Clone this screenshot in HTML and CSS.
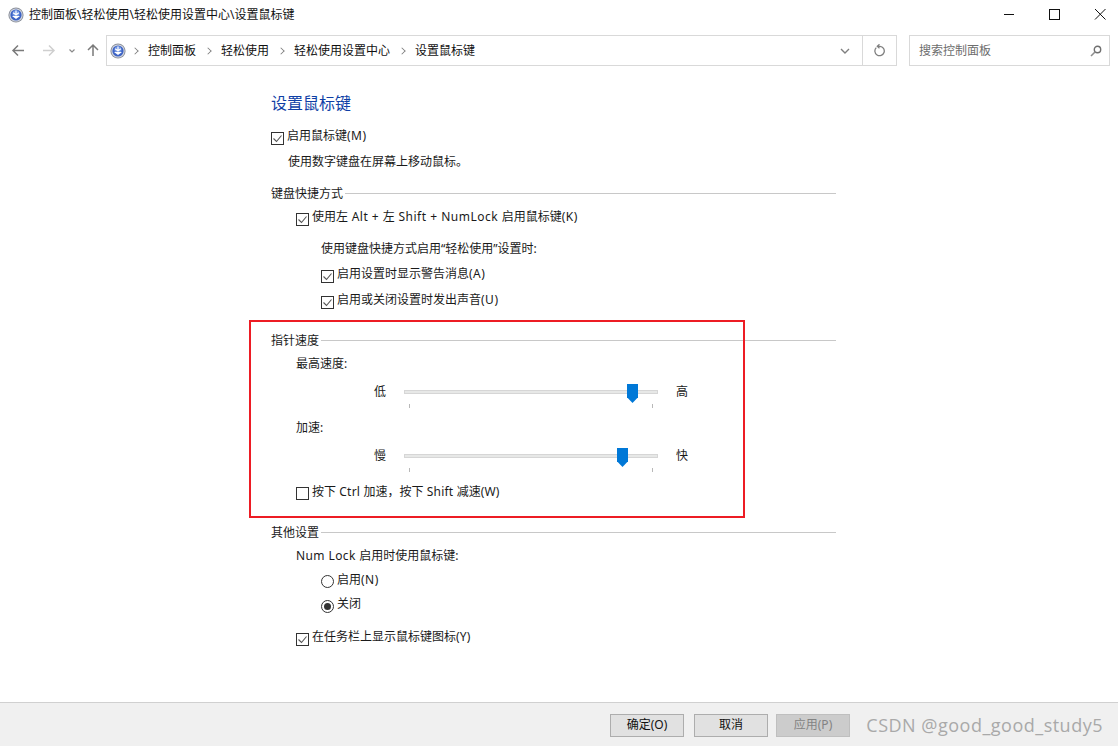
FILE: index.html
```html
<!DOCTYPE html>
<html lang="zh-CN">
<head>
<meta charset="utf-8">
<title>设置鼠标键</title>
<link rel="stylesheet" href="styles.css">
</head>
<body>
<svg class="defs" width="0" height="0">
  <defs>
    <symbol id="cp" viewBox="0 0 16 16">
      <circle cx="8" cy="8" r="7.6" fill="#8c919c"/>
      <circle cx="8" cy="8" r="6.6" fill="#d4d8e0"/>
      <circle cx="8" cy="8" r="5.6" fill="#3d63c4"/>
      <circle cx="8" cy="6.800" r="3.600" fill="#6f94e2"/>
      <path d="M8 3.600v3.400M5.200 5.800L8 8l2.800-2.200" stroke="#fff" stroke-width="1.200" fill="none"/>
      <path d="M4 9h8l-4 3z" fill="#fff"/>
    </symbol>
    <symbol id="check" viewBox="0 0 13 13">
      <rect x=".5" y=".5" width="12" height="12" fill="#fff" stroke="#333"/>
      <path d="M2.500 6.500l3 3 5-6" fill="none" stroke="#555" stroke-width="1.100"/>
    </symbol>
  </defs>
</svg>
<div class="window">
  <header class="titlebar">
    <svg class="cp-icon"><use href="#cp"/></svg>
    <span class="title-text">控制面板\轻松使用\轻松使用设置中心\设置鼠标键</span>
    <div class="controls">
      <svg class="ctl" viewBox="0 0 46 30"><path d="M24 14.500h10" stroke="#111" fill="none"/></svg>
      <svg class="ctl" viewBox="0 0 46 30"><rect x="23.500" y="9.500" width="10" height="10" stroke="#111" fill="none"/></svg>
      <svg class="ctl" viewBox="0 0 46 30"><path d="M23 9l10.500 10.500M33.500 9L23 19.500" stroke="#111" fill="none"/></svg>
    </div>
  </header>
  <nav class="navbar">
    <div class="nav-btns">
      <svg class="nav-svg" viewBox="0 0 106 30"><g fill="none"><path d="M13 15.500h11M18 10.500l-5 5 5 5" stroke="#7a7a7a" stroke-width="1.500"/><path d="M43 15.500h11M49 10.500l5 5-5 5" stroke="#cfcfcf" stroke-width="1.500"/><path d="M69.500 14.500l2.500 2.500 2.500-2.500" stroke="#8a8a8a" stroke-width="1.200"/><path d="M93 21V10M88 15l5-5 5 5" stroke="#7a7a7a" stroke-width="1.500"/></g></svg>
    </div>
    <div class="address">
      <svg class="cp-icon"><use href="#cp"/></svg>
      <span class="crumb-sep first"></span><span class="crumb">控制面板</span>
      <span class="crumb-sep"></span><span class="crumb">轻松使用</span>
      <span class="crumb-sep"></span><span class="crumb">轻松使用设置中心</span>
      <span class="crumb-sep"></span><span class="crumb">设置鼠标键</span>
      <span class="addr-spacer"></span>
      <span class="drop"><svg width="10" height="6" viewBox="0 0 10 6"><path d="M1 1l4 4 4-4" fill="none" stroke="#7f7f7f" stroke-width="1.400"/></svg></span>
      <span class="refresh"><svg width="14" height="14" viewBox="0 0 14 14"><path d="M3.300 3.600A4.700 4.700 0 1 0 7 2.300H4.500M6.500 .3L4.300 2.300l2.200 2" fill="none" stroke="#7f7f7f" stroke-width="1.300"/></svg></span>
    </div>
    <div class="search">
      <span class="search-text">搜索控制面板</span>
      <svg width="12" height="12" viewBox="0 0 12 12"><circle cx="7.500" cy="4.500" r="3.200" fill="none" stroke="#6f6f6f" stroke-width="1.400"/><path d="M5 7l-4 4" stroke="#8f8f8f" stroke-width="1.600"/></svg>
    </div>
  </nav>
  <main class="content">
    <h1 class="heading">设置鼠标键</h1>
    <div class="row m12"><svg class="box"><use href="#check"/></svg><span>启用鼠标键<b class="lat">(M)</b></span></div>
    <div class="row m10 desc">使用数字键盘在屏幕上移动鼠标。</div>

    <div class="section m15"><span class="sec-label">键盘快捷方式</span><i class="rule"></i></div>
    <div class="row m8 in1"><svg class="box"><use href="#check"/></svg><span>使用左<b class="lat"> Alt + </b>左<b class="lat"> Shift + NumLock </b>启用鼠标键<b class="lat">(K)</b></span></div>
    <div class="row m16 in2">使用键盘快捷方式启用“轻松使用”设置时:</div>
    <div class="row m9 in2"><svg class="box"><use href="#check"/></svg><span>启用设置时显示警告消息<b class="lat">(A)</b></span></div>
    <div class="row m10 in2"><svg class="box"><use href="#check"/></svg><span>启用或关闭设置时发出声音<b class="lat">(U)</b></span></div>

    <div class="section m24"><span class="sec-label">指针速度</span><i class="rule"></i></div>
    <div class="row m8 in1">最高速度:</div>
    <div class="slider m12">
      <span class="end">低</span>
      <div class="track"><i class="thumb" style="left:222px"></i><i class="tick tick-a"></i><i class="tick tick-b"></i></div>
      <span class="end">高</span>
    </div>
    <div class="row m12 in1">加速:</div>
    <div class="slider m12">
      <span class="end">慢</span>
      <div class="track"><i class="thumb" style="left:212px"></i><i class="tick tick-a"></i><i class="tick tick-b"></i></div>
      <span class="end">快</span>
    </div>
    <div class="row m12 in1"><span class="box empty"></span><span>按下<b class="lat-s"> Ctrl </b>加速，按下<b class="lat-s"> Shift </b>减速<b class="lat-s">(W)</b></span></div>

    <div class="section m24"><span class="sec-label">其他设置</span><i class="rule"></i></div>
    <div class="row m8 in1"><span><b class="lat-m">Num Lock </b>启用时使用鼠标键:</span></div>
    <div class="row m8 in2"><span class="radio up"></span><span>启用<b class="lat">(N)</b></span></div>
    <div class="row m8 in2"><span class="radio on"></span><span>关闭</span></div>
    <div class="row m17 in1"><svg class="box"><use href="#check"/></svg><span>在任务栏上显示鼠标键图标<b class="lat-s">(Y)</b></span></div>
  </main>
  <footer class="footer">
    <button class="btn">确定(O)</button>
    <button class="btn cancel">取消</button>
    <button class="btn disabled">应用(P)</button>
  </footer>
  <div class="redbox"></div>
  <div class="watermark">CSDN @good_good_study5</div>
</div>
</body>
</html>
```
FILE: styles.css
```css
* { box-sizing: border-box; }
html, body { margin: 0; padding: 0; background: #fff; }
body {
  font-family: "Noto Sans", "Noto Sans CJK SC", sans-serif;
  font-size: 12px;
  color: #1a1a1a;
}
.defs { position: absolute; }
.window {
  position: relative;
  width: 1118px;
  height: 746px;
  display: flex;
  flex-direction: column;
  overflow: hidden;
}
.titlebar {
  height: 30px;
  display: flex;
  align-items: center;
  padding-left: 8px;
  flex: none;
}
.cp-icon { width: 16px; height: 16px; flex: none; }
.title-text { margin-left: 5px; line-height: 16px; color: #111; }
.controls { margin-left: auto; display: flex; }
.ctl { width: 46px; height: 30px; display: block; }
.navbar {
  height: 40px;
  flex: none;
  display: flex;
  align-items: flex-start;
  padding: 5px 8px 0 0;
}
.nav-btns { width: 106px; height: 30px; flex: none; }
.nav-svg { display: block; width: 106px; height: 30px; }
.address {
  width: 791px;
  height: 31px;
  border: 1px solid #d9d9d9;
  display: flex;
  align-items: center;
  padding-left: 3px;
  flex: none;
}
.crumb { line-height: 16px; color: #111; margin-right: 7px; }
.crumb-sep {
  width: 6px;
  height: 6px;
  margin: 0 10px 0 2px;
  border-top: 1.3px solid #777;
  border-right: 1.3px solid #777;
  transform: rotate(45deg) scale(.85);
  flex: none;
}
.crumb-sep.first { margin-left: 6px; }
.addr-spacer { flex: 1; }
.drop {
  width: 34px;
  height: 100%;
  display: flex;
  align-items: center;
  justify-content: center;
}
.refresh {
  width: 34px;
  height: 100%;
  border-left: 1px solid #d9d9d9;
  display: flex;
  align-items: center;
  justify-content: center;
}
.search {
  width: 201px;
  height: 31px;
  margin-left: 12px;
  border: 1px solid #d9d9d9;
  display: flex;
  align-items: center;
  justify-content: space-between;
  padding: 0 7px 0 9px;
  flex: none;
}
.search-text { color: #6d6d6d; line-height: 16px; }
.content {
  flex: 1;
  padding: 21px 282px 0 271px;
}
.heading {
  margin: 0;
  height: 24px;
  line-height: 24px;
  font-size: 16px;
  font-weight: 400;
  color: #0f3fa6;
}
.heading + .row { margin-top: 13px; }
.lat { font-weight: 400; letter-spacing: .5px; }
.lat-m { font-weight: 400; letter-spacing: .4px; }
.lat-s { font-weight: 400; letter-spacing: .2px; }
.row { height: 16px; line-height: 16px; display: flex; align-items: flex-start; white-space: pre; }
.box { width: 13px; height: 13px; margin: 4px 3px 0 0; flex: none; display: block; }
.box.empty { background: #fff; border: 1px solid #333; margin-top: 3px; }
.radio {
  width: 13px; height: 13px; margin: 4px 3px 0 0; flex: none;
  border: 1px solid #333; border-radius: 50%; background: #fff;
  display: flex; align-items: center; justify-content: center;
}
.radio.up { margin-top: 3px; }
.radio.on::after { content: ""; width: 7px; height: 7px; border-radius: 50%; background: #333; }
.desc { padding-left: 17px; }
.in1 { padding-left: 25px; }
.in2 { padding-left: 50px; }
.m8 { margin-top: 8px; }
.m9 { margin-top: 9px; }
.m10 { margin-top: 10px; }
.m12 { margin-top: 12px; }
.m15 { margin-top: 15px; }
.m16 { margin-top: 16px; }
.m17 { margin-top: 17px; }
.m24 { margin-top: 24px; }
.section { height: 16px; line-height: 16px; display: flex; align-items: center; gap: 2px; }
.sec-label { padding-top: 2px; }
.rule { flex: 1; height: 1px; background: #c8c8c8; }
.slider {
  height: 24px;
  display: flex;
  align-items: flex-start;
  padding-left: 103px;
  line-height: 16px;
}
.end { width: 12px; flex: none; }
.track {
  position: relative;
  width: 254px;
  height: 4px;
  margin: 6px 18px 0 18px;
  background: #e7e8e7;
  border: 1px solid #d6d6d6;
  flex: none;
}
.thumb {
  position: absolute;
  top: -7px;
  width: 11px;
  height: 19px;
  background: #0078d7;
  clip-path: polygon(0 0, 100% 0, 100% 70%, 50% 100%, 0 70%);
}
.tick { position: absolute; top: 13px; width: 1px; height: 4px; background: #b8b8b8; }
.tick-a { left: 4px; }
.tick-b { left: 247px; }
.footer {
  height: 44px;
  flex: none;
  background: #f0f0f0;
  border-top: 1px solid #d0d0d0;
  display: flex;
  align-items: flex-start;
  padding: 11px 0 0 610px;
}
.btn {
  width: 74px;
  height: 23px;
  padding: 0 0 2px;
  font: inherit;
  line-height: 18px;
  color: #111;
  background: #e1e1e1;
  border: 1px solid #adadad;
  border-radius: 0;
}
.cancel { margin-left: 10px; }
.disabled { margin-left: 8px; background: #cccccc; border-color: #bfbfbf; color: #838383; }
.redbox {
  position: absolute;
  left: 249px;
  top: 320px;
  width: 496px;
  height: 198px;
  border: 2px solid #ed1c24;
}
.watermark {
  position: absolute;
  right: 15px;
  top: 713px;
  font-family: "Open Sans", sans-serif;
  font-size: 18px;
  letter-spacing: .5px;
  line-height: 24px;
  color: #a9a9a9;
  white-space: nowrap;
}
```
